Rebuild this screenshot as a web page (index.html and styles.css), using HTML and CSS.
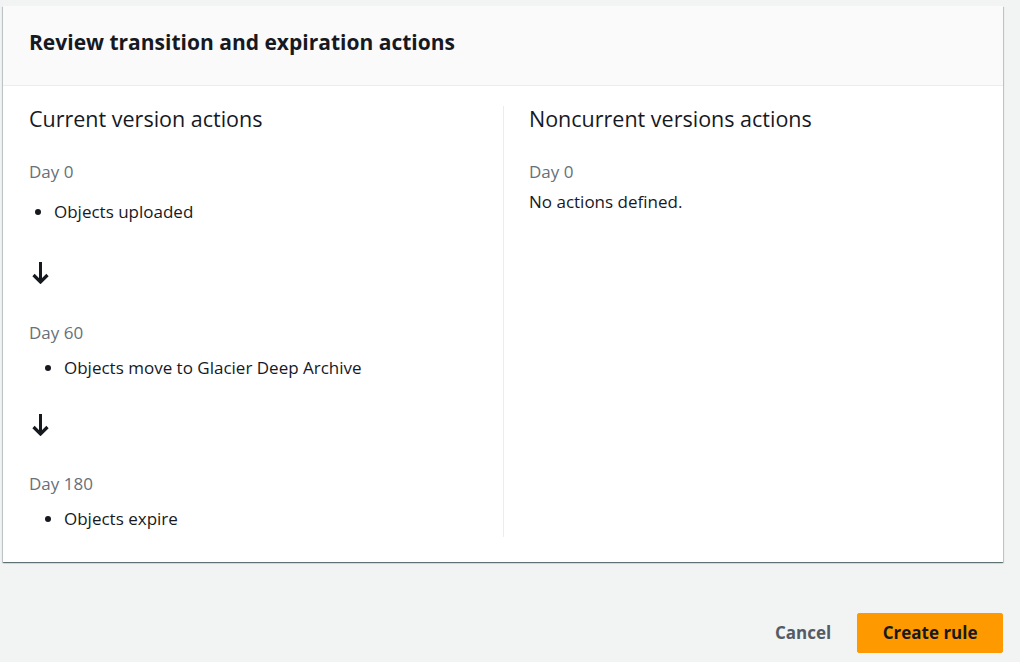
FILE: index.html
```html
<!DOCTYPE html>
<html lang="en">
<head>
<meta charset="utf-8">
<title>Review transition and expiration actions</title>
<link rel="stylesheet" href="styles.css">
</head>
<body>
<div class="page">
  <section class="card">
    <header class="card-header">
      <h2 class="card-title">Review transition and expiration actions</h2>
    </header>
    <div class="card-body">
      <div class="column">
        <h3 class="column-title">Current version actions</h3>
        <div class="step step-first">
          <div class="day">Day 0</div>
          <ul class="actions">
            <li>Objects uploaded</li>
          </ul>
        </div>
        <div class="arrow arrow-first">
          <svg width="17" height="22" viewBox="0 0 17 22" aria-hidden="true"><path d="M8.5 0V19.5" fill="none" stroke="#16191f" stroke-width="3"/><path d="M1.5 13L8.5 20L15.5 13" fill="none" stroke="#16191f" stroke-width="3.2"/></svg>
        </div>
        <div class="step">
          <div class="day">Day 60</div>
          <ul class="actions">
            <li>Objects move to Glacier Deep Archive</li>
          </ul>
        </div>
        <div class="arrow">
          <svg width="17" height="22" viewBox="0 0 17 22" aria-hidden="true"><path d="M8.5 0V19.5" fill="none" stroke="#16191f" stroke-width="3"/><path d="M1.5 13L8.5 20L15.5 13" fill="none" stroke="#16191f" stroke-width="3.2"/></svg>
        </div>
        <div class="step step-last">
          <div class="day">Day 180</div>
          <ul class="actions">
            <li>Objects expire</li>
          </ul>
        </div>
      </div>
      <div class="column column-right">
        <h3 class="column-title">Noncurrent versions actions</h3>
        <div class="day">Day 0</div>
        <p class="empty">No actions defined.</p>
      </div>
    </div>
  </section>
  <footer class="footer">
    <button class="btn-link" type="button">Cancel</button>
    <button class="btn-primary" type="button">Create rule</button>
  </footer>
</div>
</body>
</html>
```
FILE: styles.css
```css
* { box-sizing: border-box; }
html, body {
  margin: 0;
  padding: 0;
  background: #f2f3f3;
}
body {
  font-family: "Open Sans", "Noto Sans", Arial, sans-serif;
  color: #16191f;
  font-size: 17px;
  line-height: 22px;
}
.page {
  padding: 6px 17px 0 3px;
}
.card {
  background: #ffffff;
  box-shadow: 0 1px 1px 0 rgba(0, 28, 36, 0.45), 1px 1px 1px 0 rgba(0, 28, 36, 0.15), -1px 1px 1px 0 rgba(0, 28, 36, 0.15);
}
.card-header {
  background: #fafafa;
  border-bottom: 1px solid #eaeded;
  padding: 24px 26px 30px;
}
.card-title {
  margin: 0;
  font-size: 21px;
  line-height: 25px;
  font-weight: 700;
  color: #16191f;
}
.card-body {
  display: grid;
  grid-template-columns: 474px 474px;
  padding: 20px 26px 25px;
}
.column {
  padding-bottom: 7px;
}
.column-right {
  border-left: 1px solid #eaeded;
  padding-left: 25px;
}
.column-title {
  margin: 0 0 29px;
  font-size: 21.5px;
  line-height: 26px;
  font-weight: 400;
  color: #16191f;
}
.day {
  color: #687078;
}
.actions {
  margin: 13px 0 0;
  padding-left: 35px;
}
.step-first .actions {
  margin-top: 18px;
  padding-left: 25px;
}
.arrow {
  margin: 35px 0 37px 3px;
  height: 22px;
}
.arrow svg {
  display: block;
}
.arrow-first {
  margin-top: 39px;
  margin-bottom: 38px;
}
.empty {
  margin: 8px 0 0;
}
.footer {
  display: flex;
  justify-content: flex-end;
  align-items: center;
  gap: 20px;
  margin-top: 51px;
}
.btn-link {
  font: inherit;
  font-weight: 700;
  color: #545b64;
  background: none;
  border: 0;
  padding: 4px 6px;
  cursor: pointer;
}
.btn-primary {
  font: inherit;
  font-weight: 700;
  color: #16191f;
  background: #ff9900;
  border: 1px solid #ff9900;
  border-radius: 2px;
  padding: 8px 24.5px;
  line-height: 22px;
  cursor: pointer;
}
```
